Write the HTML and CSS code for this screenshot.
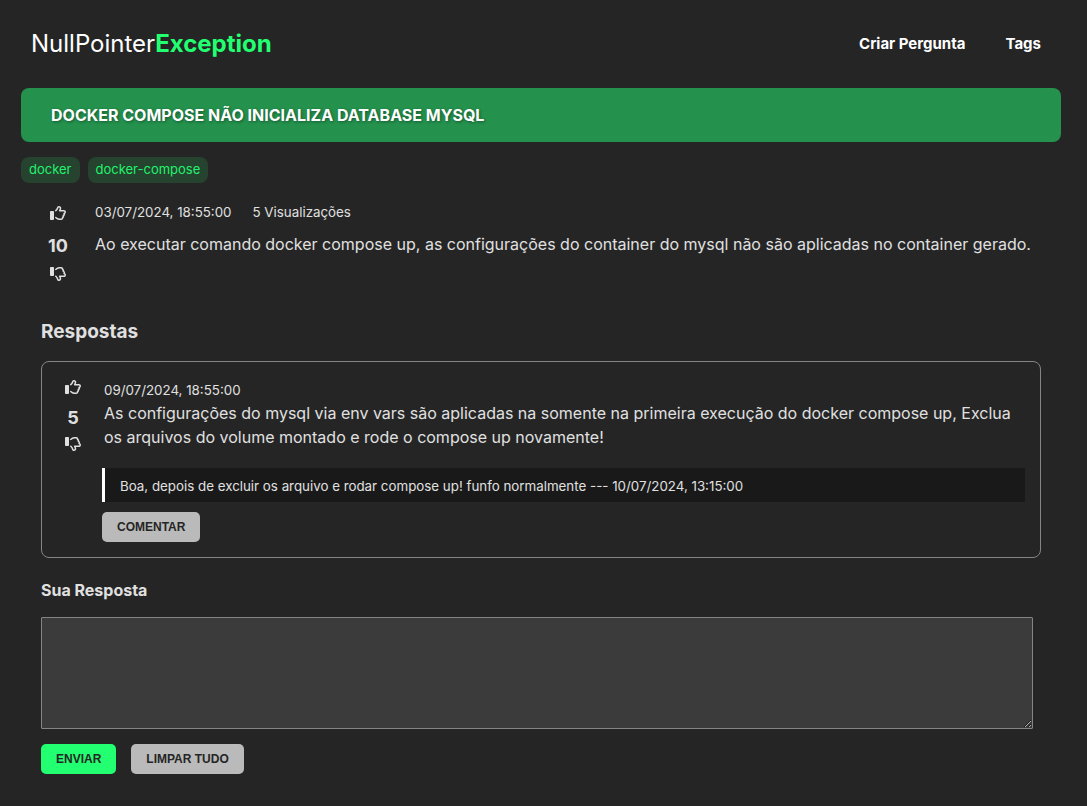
FILE: index.html
```html
<!DOCTYPE html>
<html lang="pt-BR">
<head>
<meta charset="utf-8">
<title>NullPointerException</title>
<link rel="stylesheet" href="styles.css">
</head>
<body>
<svg class="sprite" aria-hidden="true">
  <symbol id="thumb" viewBox="0 0 512 512">
    <path d="M96 191.1H32c-17.67 0-32 14.33-32 31.1v223.1c0 17.67 14.33 31.1 32 31.1h64c17.67 0 32-14.33 32-31.1V223.1C128 206.3 113.7 191.1 96 191.1zM512 227c0-36.89-30.05-66.92-66.97-66.92h-99.86C354.7 135.1 360 113.5 360 100.8c0-33.8-26.2-68.78-70.06-68.78c-46.61 0-59.36 32.44-69.61 58.5c-31.66 80.5-60.33 66.39-60.33 93.47c0 12.84 10.36 23.99 24.02 23.99c5.256 0 10.55-1.721 14.97-5.26c76.76-61.37 57.97-122.7 90.95-122.7c16.08 0 22.06 12.75 22.06 20.79c0 7.404-7.594 39.55-25.55 71.59c-2.046 3.646-3.066 7.686-3.066 11.72c0 13.92 11.43 23.1 24 23.1h137.6C455.5 208.1 464 216.6 464 227c0 9.809-7.766 18.03-17.67 18.71c-12.66 .8593-22.36 11.4-22.36 23.94c0 15.47 11.39 15.95 11.39 28.91c0 25.37-35.03 12.34-35.03 42.15c0 11.22 6.392 13.03 6.392 22.25c0 22.66-29.77 13.76-29.77 40.64c0 4.515 1.11 5.961 1.11 9.456c0 10.45-8.516 18.95-18.97 18.95h-52.62c-25.62 0-51.02-8.466-71.5-23.81l-36.66-27.51c-4.315-3.245-9.37-4.811-14.38-4.811c-13.85 0-24.03 11.38-24.03 24.04c0 7.287 3.312 14.42 9.596 19.13l36.67 27.52C235 468.1 270.6 480 306.6 480h52.62c35.33 0 64.36-27.49 66.8-62.2c17.77-12.23 28.83-32.51 28.83-54.83c0-3.046-.2187-6.107-.6406-9.122c17.84-12.15 29.28-32.58 29.28-55.28c0-5.311-.6406-10.54-1.875-15.64C499.9 270.1 512 250.2 512 227z"/>
  </symbol>
</svg>
<header class="topbar">
  <a class="brand" href="#">NullPointer<strong>Exception</strong></a>
  <nav class="menu">
    <a href="#">Criar Pergunta</a>
    <a href="#">Tags</a>
  </nav>
</header>
<main class="page">
  <h1 class="title">DOCKER COMPOSE NÃO INICIALIZA DATABASE MYSQL</h1>
  <div class="tags">
    <a class="tag" href="#">docker</a>
    <a class="tag" href="#">docker-compose</a>
  </div>
  <section class="question">
    <div class="votes">
      <button class="vote" type="button" aria-label="Gostei"><svg class="icon"><use href="#thumb"/></svg></button>
      <span class="score">10</span>
      <button class="vote" type="button" aria-label="Não gostei"><svg class="icon icon-down"><use href="#thumb"/></svg></button>
    </div>
    <div class="content">
      <div class="meta"><span>03/07/2024, 18:55:00</span><span>5 Visualizações</span></div>
      <p class="text">Ao executar comando docker compose up, as configurações do container do mysql não são aplicadas no container gerado.</p>
    </div>
  </section>
  <section class="answers">
    <h2 class="heading">Respostas</h2>
    <article class="answer">
      <div class="votes votes-small">
        <button class="vote" type="button" aria-label="Gostei"><svg class="icon"><use href="#thumb"/></svg></button>
        <span class="score">5</span>
        <button class="vote" type="button" aria-label="Não gostei"><svg class="icon icon-down"><use href="#thumb"/></svg></button>
      </div>
      <div class="answer-content">
        <div class="answer-body">
          <div class="meta">09/07/2024, 18:55:00</div>
          <p class="text">As configurações do mysql via env vars são aplicadas na somente na primeira execução do docker compose up, Exclua os arquivos do volume montado e rode o compose up novamente!</p>
        </div>
        <p class="comment">Boa, depois de excluir os arquivo e rodar compose up! funfo normalmente --- 10/07/2024, 13:15:00</p>
        <button class="button" type="button">COMENTAR</button>
      </div>
    </article>
    <form class="reply">
      <label class="label" for="reply">Sua Resposta</label>
      <textarea class="field" id="reply"></textarea>
      <div class="actions">
        <button class="button button-primary" type="button">ENVIAR</button>
        <button class="button" type="reset">LIMPAR TUDO</button>
      </div>
    </form>
  </section>
</main>
</body>
</html>
```
FILE: styles.css
```css
* { box-sizing: border-box; }

body {
  margin: 0;
  background: #252525;
  color: #e0e0e0;
  font-family: Inter, "Liberation Sans", sans-serif;
  font-size: 16px;
  line-height: 24px;
}

h1, h2, p { margin: 0; }
a { text-decoration: none; }
.sprite { display: none; }

.topbar {
  display: flex;
  justify-content: space-between;
  align-items: center;
  height: 88px;
  padding: 0 46px 0 31px;
}

.brand { color: #fff; font-size: 24px; font-weight: 400; }
.brand strong { color: #22ff70; font-weight: 700; }
.menu { display: flex; gap: 40px; }
.menu a { color: #fff; font-size: 15px; font-weight: 700; }

.page { padding: 0 26px 32px 21px; }

.title {
  padding: 15px 30px;
  border-radius: 8px;
  background: #24914d;
  color: #fff;
  font-size: 16px;
  font-weight: 700;
  text-shadow: 1px 1px 3px rgba(0, 0, 0, 0.4);
}

.tags { display: flex; gap: 8px; margin-top: 15px; }

.tag {
  padding: 0 8px 2px;
  border-radius: 8px;
  background: #25432f;
  color: #22f26c;
  font-size: 13px;
}

.question { display: flex; gap: 27px; margin-top: 17px; padding-left: 27px; }

.votes {
  display: flex;
  flex-direction: column;
  align-items: center;
  flex: none;
  width: 20px;
  padding-top: 5px;
}

.vote {
  display: flex;
  padding: 0;
  border: 0;
  background: none;
  color: inherit;
  cursor: pointer;
}

.icon { width: 16px; height: 16px; fill: currentColor; }
.icon-down { transform: scaleY(-1); }
.score { margin: 13px 0 8px; font-size: 18px; font-weight: 700; }

.content { flex: 1; }
.content .text { margin-top: 8px; }
.meta { display: flex; gap: 21px; font-size: smaller; }

.answers { padding: 0 20px; }
.heading { margin-top: 38px; font-size: 19px; font-weight: 700; }

.answer {
  display: flex;
  gap: 19px;
  margin-top: 17px;
  padding: 15px 15px 15px 21px;
  border: 1px solid #858585;
  border-radius: 8px;
}

.votes-small { padding-top: 2px; }
.votes-small .score { margin: 11px 0 6px; }
.answer-content { flex: 1; }
.answer-body { padding: 2px 2px 0; }
.answer-body .meta { line-height: 22px; }

.comment {
  margin-top: 19px;
  padding: 6px 15px 4px;
  border-left: 3px solid #fff;
  background: #191919;
  font-size: smaller;
}

.button {
  height: 30px;
  padding: 0 15px;
  border: 0;
  border-radius: 5px;
  background: #bababa;
  color: #252525;
  font-family: "Liberation Sans", Arial, sans-serif;
  font-size: 12px;
  font-weight: 700;
  cursor: pointer;
}

.button-primary { background: #22ff70; }
.comment + .button { margin-top: 10px; }

.label { display: block; margin-top: 20px; font-weight: 700; }

.field {
  display: block;
  width: calc(100% - 8px);
  height: 112px;
  margin-top: 15px;
  padding: 10px;
  border: 1px solid #858585;
  border-radius: 1px;
  background: #3b3b3b;
  color: #e0e0e0;
  font: inherit;
}

.actions { display: flex; gap: 15px; margin-top: 15px; }
```
